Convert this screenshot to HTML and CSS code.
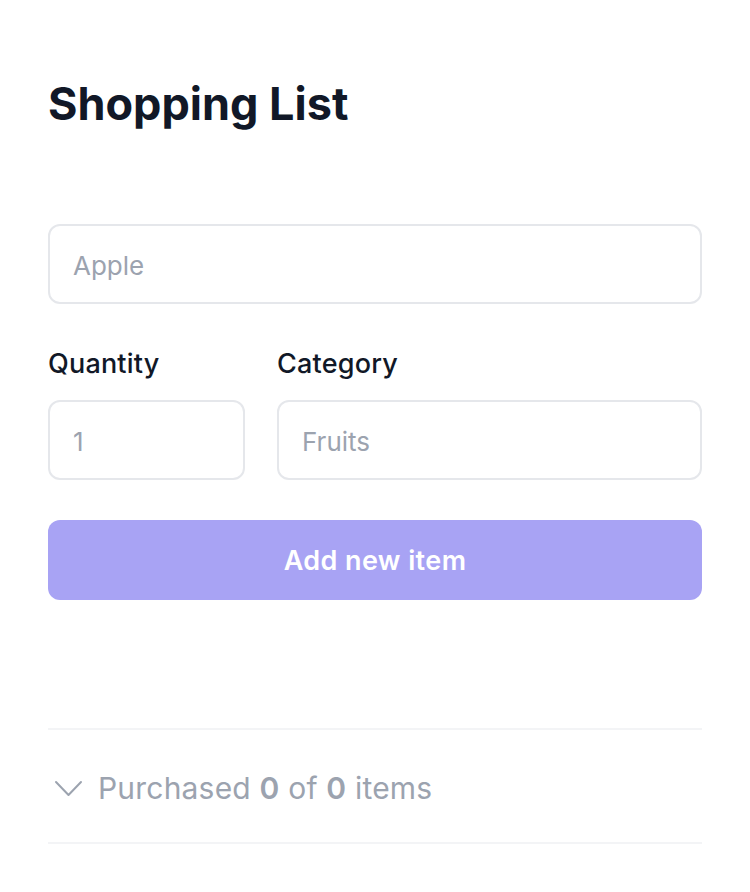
FILE: index.html
```html
<!DOCTYPE html>
<html>
<head>
<meta charset="utf-8">
<link rel="stylesheet" href="styles.css">
</head>
<body>
<main class="page">
  <h1 class="title">Shopping List</h1>
  <form class="form">
    <input class="field" type="text" placeholder="Apple">
    <div class="row">
      <label class="group qty">
        <span class="label">Quantity</span>
        <input class="field" type="text" placeholder="1">
      </label>
      <label class="group cat">
        <span class="label">Category</span>
        <input class="field" type="text" placeholder="Fruits">
      </label>
    </div>
    <button class="btn" type="button">Add new item</button>
  </form>
  <div class="purchased">
    <svg class="chev" width="30" height="18" viewBox="0 0 30 18"><path d="M2 2 L14.5 15 L27 2" fill="none" stroke="#9ca3af" stroke-width="2" stroke-linecap="round" stroke-linejoin="round"/></svg>
    <span class="ptext">Purchased <b>0</b> of <b>0</b> items</span>
  </div>
</main>
</body>
</html>
```

FILE: styles.css
```css
* { box-sizing: border-box; }
html, body { margin: 0; padding: 0; background: #fff; }
body { font-family: Inter, "Noto Sans", sans-serif; color: #111827; }
.page { padding: 0 48px; }
.title {
  margin: 0;
  padding-top: 76px;
  font-size: 45px;
  line-height: 56px;
  font-weight: 700;
  color: #111827;
}
.form { margin-top: 92px; display: flex; flex-direction: column; }
.field {
  display: block;
  width: 100%;
  height: 80px;
  border: 2px solid #e5e7eb;
  border-radius: 12px;
  padding: 3px 23px 0;
  font-family: Inter, sans-serif;
  font-size: 26px;
  color: #111827;
  background: #fff;
  outline: none;
}
.field::placeholder { color: #9ca3af; }
.row { display: flex; gap: 32px; margin-top: 42px; }
.group { display: flex; flex-direction: column; gap: 18px; }
.qty { width: 197px; }
.cat { flex: 1; }
.label { font-size: 27px; line-height: 36px; font-weight: 500; color: #111827; letter-spacing: 0.2px; }
.btn {
  margin-top: 40px;
  height: 80px;
  border: none;
  border-radius: 12px;
  background: #a8a3f4;
  color: #fff;
  font-family: Inter, sans-serif;
  font-size: 27px;
  font-weight: 600;
  letter-spacing: 0.4px;
}
.purchased {
  margin-top: 128px;
  height: 116px;
  border-top: 2px solid #f3f4f6;
  border-bottom: 2px solid #f3f4f6;
  display: flex;
  align-items: center;
  gap: 14px;
  padding-left: 6px;
  padding-top: 4px;
}
.chev { display: block; margin-top: 2px; }
.ptext { font-size: 30px; color: #9ca3af; font-weight: 400; letter-spacing: 0.2px; }
.ptext b { font-weight: 600; }
```
